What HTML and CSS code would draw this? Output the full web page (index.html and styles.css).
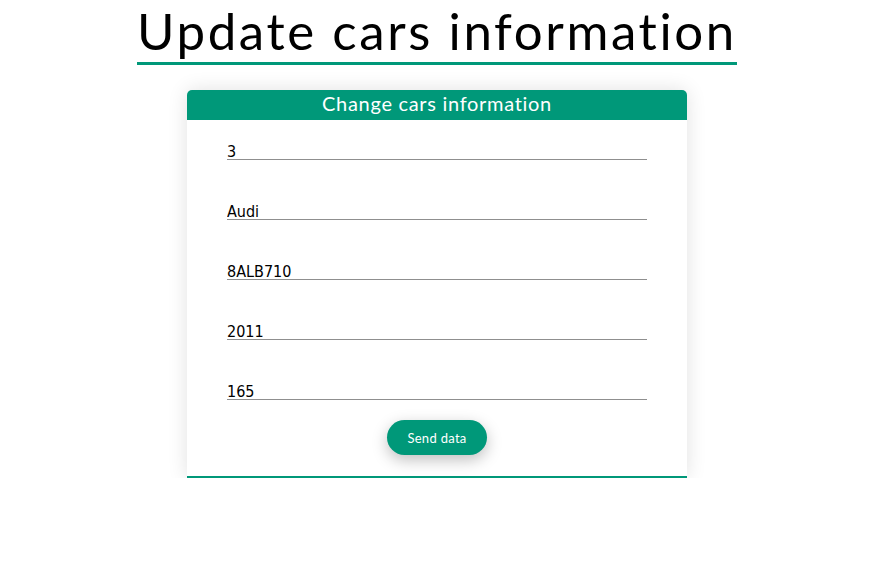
FILE: index.html
```html
<!DOCTYPE html>
<html lang="en">
<head>
<meta charset="utf-8">
<title>Update cars information</title>
<link rel="stylesheet" href="styles.css">
</head>
<body>
<main class="page">
  <h1 class="title">Update cars information</h1>
  <form class="card">
    <div class="card-header">Change cars information</div>
    <div class="fields">
      <input class="field" type="text" value="3">
      <input class="field" type="text" value="Audi">
      <input class="field" type="text" value="8ALB710">
      <input class="field" type="text" value="2011">
      <input class="field" type="text" value="165">
      <button class="send" type="button">Send data</button>
    </div>
  </form>
</main>
</body>
</html>
```
FILE: styles.css
```css
html, body {
  margin: 0;
  padding: 0;
  background: #ffffff;
}
.page {
  display: flex;
  flex-direction: column;
  align-items: center;
  padding-left: 5px;
  font-family: "Lato", "Noto Sans", sans-serif;
  font-variant-ligatures: none;
}
.title {
  width: 600px;
  margin: 0;
  padding-top: 2px;
  height: 65px;
  box-sizing: border-box;
  border-bottom: 3px solid #009879;
  font-weight: 400;
  font-size: 51px;
  letter-spacing: 2.6px;
  line-height: 58px;
  text-align: center;
  color: #000;
}
.card {
  width: 500px;
  margin-top: 25px;
  background: #fff;
  border-radius: 5px 5px 0 0;
  border-bottom: 2px solid #009879;
  box-shadow: 0 0 20px rgba(0, 0, 0, 0.12);
}
.card-header {
  height: 30px;
  background: #009879;
  color: #fff;
  border-radius: 5px 5px 0 0;
  text-align: center;
  font-size: 20px;
  letter-spacing: 0.7px;
  line-height: 26px;
}
.fields {
  display: flex;
  flex-direction: column;
  align-items: center;
  gap: 40px;
  padding: 20px 40px 21px;
}
.field {
  width: 420px;
  height: 20px;
  box-sizing: border-box;
  margin: 0;
  padding: 4px 0 0;
  border: none;
  border-bottom: 1px solid #8f8f8f;
  font-family: "DejaVu Sans Condensed", "DejaVu Sans", sans-serif;
  font-stretch: condensed;
  font-size: 16px;
  color: #000;
  outline: none;
  background: transparent;
}
.send {
  margin-top: -20px;
  width: 100px;
  height: 35px;
  border: none;
  border-radius: 18px;
  background: #009879;
  color: #fff;
  font-family: "Lato", "Noto Sans", sans-serif;
  font-size: 13px;
  letter-spacing: 0.3px;
  box-shadow: 0 5px 15px rgba(0, 0, 0, 0.25);
}
```
